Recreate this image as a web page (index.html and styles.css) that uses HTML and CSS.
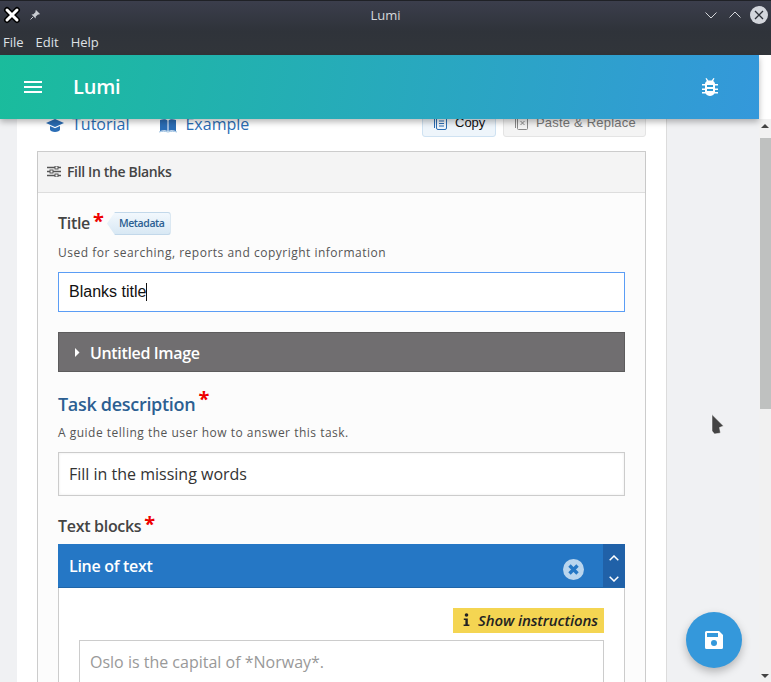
FILE: index.html
```html
<!DOCTYPE html>
<html lang="en">
<head>
<meta charset="utf-8">
<title>Lumi</title>
<link rel="stylesheet" href="styles.css">
</head>
<body>
<div class="window">
  <header class="chrome">
    <div class="titlebar">
      <div class="tb-left">
        <svg class="app-x" width="18" height="18" viewBox="0 0 18 18"><path d="M4 4l10 10M14 4L4 14" stroke="#000" stroke-width="6" stroke-linecap="round"/><path d="M4 4l10 10M14 4L4 14" stroke="#fff" stroke-width="3" stroke-linecap="round"/></svg>
        <svg class="pin" width="12" height="12" viewBox="0 0 12 12"><path d="M7 1l4 4-1 .6-1-.2L6.800 7.600 6.600 9.500 2.500 5.400 4.400 5.200 6.600 3 6.400 2z" fill="#c9ccd2"/><path d="M4 8L1.500 10.500" stroke="#c9ccd2"/></svg>
      </div>
      <span class="tb-title">Lumi</span>
      <div class="tb-right">
        <svg width="14" height="14" viewBox="0 0 14 14"><path d="M1.500 4.500L7 10l5.500-5.500" fill="none" stroke="#d5d7db" stroke-width="1"/></svg>
        <svg class="tb-up" width="14" height="14" viewBox="0 0 14 14"><path d="M1.500 9.500L7 4l5.500 5.500" fill="none" stroke="#d5d7db" stroke-width="1"/></svg>
        <svg width="18" height="18" viewBox="0 0 18 18"><circle cx="9" cy="9" r="9" fill="#d3d6dc"/><path d="M5 5l8 8M13 5l-8 8" stroke="#2d3038" stroke-width="1.300"/></svg>
      </div>
    </div>
    <nav class="menubar"><span>File</span><span>Edit</span><span>Help</span></nav>
  </header>

  <div class="appbar">
    <div class="appbar-left">
      <svg width="18" height="12" viewBox="0 0 18 12"><path d="M0 1h18M0 6h18M0 11h18" stroke="#fff" stroke-width="2"/></svg>
      <span class="appbar-title">Lumi</span>
    </div>
    <svg class="bug" width="16" height="18" viewBox="0 0 16 18"><path d="M4.500 0l1.800 2.500h3.400L11.500 0l1 .6L11.200 3C12.500 4 13 5 13 6h3v1.500h-3v3h3V12h-3v2h3v1.500h-3.500C11.500 17 10 18 8 18s-3.500-1-4.500-2.500H0V14h3v-2H0v-1.500h3v-3H0V6h3c0-1 .5-2 1.800-3L3.500.6z" fill="#fff"/><path d="M5 8h6M5 12h6" stroke="#2e9ad2" stroke-width="1.800"/></svg>
  </div>

  <div class="viewport">
    <main class="page">
      <section class="card">
        <div class="toolbar">
          <div class="links">
            <a class="link">
              <svg width="18" height="14" viewBox="0 0 18 14"><path d="M9 0L0 4l9 4 9-4z" fill="#2a6db5"/><path d="M4 7v3.500C4 12 6.500 13 9 13s5-1 5-2.500V7l-5 2.300z" fill="#2a6db5"/></svg>
              Tutorial
            </a>
            <a class="link">
              <svg width="18" height="15" viewBox="0 0 18 15"><path d="M1 2c3-1 6-1 7.500.5V13C7 12 4 12 1 13z" fill="#2a6db5"/><path d="M17 2c-3-1-6-1-7.500.5V13c1.500-1 4.500-1 7.500 0z" fill="#2a6db5"/><path d="M0 14c3-1 6-1 9 0 3-1 6-1 9 0" fill="none" stroke="#9bbfe0"/></svg>
              Example
            </a>
          </div>
          <div class="clip-btns">
            <button class="btn btn-copy">
              <svg width="14" height="16" viewBox="0 0 14 16"><path d="M1.500 3v10" stroke="#2a6db5"/><rect x="3.500" y="1.500" width="10" height="13" rx="1.500" fill="none" stroke="#2a6db5"/><path d="M6 6h5M6 8.500h5M6 11h5" stroke="#2a6db5"/></svg>
              Copy
            </button>
            <button class="btn btn-paste">
              <svg width="14" height="16" viewBox="0 0 14 16"><path d="M1.500 3v10" stroke="#888"/><rect x="3.500" y="1.500" width="10" height="13" rx="1" fill="none" stroke="#888"/><path d="M6.500 6l4 4M10.500 6l-4 4" stroke="#888"/></svg>
              Paste &amp; Replace
            </button>
          </div>
        </div>

        <div class="panel">
          <div class="panel-head">
            <svg width="14" height="11" viewBox="0 0 14 11"><path d="M0 1.500h14M0 5.500h14M0 9.500h14" stroke="#555" stroke-width="1.300"/><rect x="8" y="0" width="3" height="3" fill="#f4f4f4" stroke="#555"/><rect x="3" y="4" width="3" height="3" fill="#f4f4f4" stroke="#555"/><rect x="8" y="8" width="3" height="3" fill="#f4f4f4" stroke="#555"/></svg>
            <span>Fill In the Blanks</span>
          </div>
          <div class="panel-body">
            <div class="field field-title">
              <div class="label-row">
                <span class="label">Title</span><span class="star">*</span>
                <span class="tag">Metadata</span>
              </div>
              <p class="hint hint-title">Used for searching, reports and copyright information</p>
              <div class="input input-focus">Blanks title<i class="caret"></i></div>
            </div>

            <div class="group-head">
              <svg width="6" height="9" viewBox="0 0 6 9"><path d="M1 0l4.500 4.500L1 9z" fill="#fff"/></svg>
              <span>Untitled Image</span>
            </div>

            <div class="field field-task">
              <div class="label-row">
                <span class="label label-big">Task description</span><span class="star star-big">*</span>
              </div>
              <p class="hint hint-task">A guide telling the user how to answer this task.</p>
              <div class="input input-plain">Fill in the missing words</div>
            </div>

            <div class="field field-blocks">
              <div class="label-row">
                <span class="label">Text blocks</span><span class="star">*</span>
              </div>
              <div class="item-head">
                <span class="item-title">Line of text</span>
                <svg class="item-x" width="21" height="21" viewBox="0 0 21 21"><circle cx="10.500" cy="10.500" r="10.500" fill="#b9d5ee"/><path d="M6.500 6.500l8 8M14.500 6.500l-8 8" stroke="#2577c5" stroke-width="3.400"/></svg>
                <div class="item-order">
                  <svg width="10" height="6" viewBox="0 0 10 6"><path d="M.7 5.300L5 1l4.300 4.300" fill="none" stroke="#fff" stroke-width="1.500"/></svg>
                  <svg width="10" height="6" viewBox="0 0 10 6"><path d="M.7.700L5 5 9.300.7" fill="none" stroke="#fff" stroke-width="1.500"/></svg>
                </div>
              </div>
              <div class="item-body">
                <div class="instr-row">
                  <span class="instr">
                    <svg width="7" height="14" viewBox="0 0 7 14"><circle cx="3.500" cy="2" r="1.800" fill="#222"/><path d="M.8 5.500h4v6h1.600V13H.6v-1.500h1.800V7H.8z" fill="#222"/></svg>
                    Show instructions
                  </span>
                </div>
                <div class="input input-ph">Oslo is the capital of *Norway*.</div>
              </div>
            </div>
          </div>
        </div>
      </section>
      <button class="fab" aria-label="Save">
        <svg width="18" height="18" viewBox="0 0 18 18"><path d="M1.500 0H14l4 4v12.500a1.500 1.500 0 0 1-1.500 1.500h-15A1.500 1.500 0 0 1 0 16.500v-15A1.500 1.500 0 0 1 1.500 0z" fill="#fff"/><rect x="2" y="2" width="11" height="4" fill="#3498db"/><circle cx="9" cy="12" r="3" fill="#3498db"/></svg>
      </button>
      <svg class="cursor" width="14" height="22" viewBox="0 0 14 22"><path d="M1 .5L12.500 12 8.500 13.500 9.500 19 3.500 20 1 17z" fill="#444" stroke="#fff" stroke-width=".5"/></svg>
    </main>
    <aside class="scrollbar">
      <span class="sb-arrow sb-up"></span>
      <div class="sb-thumb"></div>
      <span class="sb-arrow sb-down"></span>
    </aside>
  </div>
</div>
</body>
</html>
```

FILE: styles.css
```css
* { box-sizing: border-box; }
html, body { margin: 0; padding: 0; height: 100%; overflow: hidden; }
body { font-family: "Open Sans", sans-serif; color: #333; }
.window { width: 771px; height: 682px; display: flex; flex-direction: column; overflow: hidden; position: relative; }

.chrome { height: 55px; flex: none; background: linear-gradient(#3b3e4c 0, #2f333a 30px, #31353a 100%); border-top: 1px solid #1f2126; color: #e6e8ec; }
.titlebar { height: 28px; display: flex; align-items: center; justify-content: space-between; position: relative; padding: 0 3px; }
.tb-left { display: flex; align-items: center; gap: 8px; }
.tb-right { display: flex; align-items: center; gap: 8px; }
.tb-up { margin-left: 2px; }
.tb-title { position: absolute; left: 0; right: 0; text-align: center; font-size: 13px; color: #d6d8dc; }
.menubar { height: 26px; display: flex; gap: 12px; align-items: center; padding-left: 3px; font-size: 13px; color: #dfe2e6; }

.appbar { height: 64px; flex: none; display: flex; align-items: center; justify-content: space-between; padding: 0 41px 0 24px; background: linear-gradient(100deg, #1abc9c 0%, #3498db 100%); width: 759px; box-shadow: 0 3px 6px rgba(0,0,0,.28); position: relative; z-index: 2; }
.appbar-left { display: flex; align-items: center; gap: 31px; }
.appbar-title { font-size: 20px; font-weight: 600; color: #fff; letter-spacing: -.2px; line-height: 26px; }

.viewport { flex: 1; min-height: 0; display: flex; margin-top: -64px; padding-top: 64px; }
.page { width: 759px; flex: none; background: #f0f1f3; padding: 0 92px 0 17px; position: relative; overflow: hidden; }
.scrollbar { flex: 1; background: #f1f1f1; position: relative; display: flex; flex-direction: column; }
.sb-thumb { width: 11px; height: 271px; margin: 19px 0 0 1px; background: #bfc1c0; }
.sb-arrow { position: absolute; left: 2px; width: 0; height: 0; border-left: 4px solid transparent; border-right: 4px solid transparent; }
.sb-up { top: 5px; border-bottom: 4px solid #444; }
.sb-down { bottom: 4px; border-top: 4px solid #444; }

.card { width: 650px; background: #fff; border-right: 1px solid #dcdcdc; padding: 0 20px; height: 700px; }
.toolbar { height: 32px; display: flex; justify-content: space-between; align-items: flex-end; margin-top: -14px; position: relative; }
.links { display: flex; gap: 30px; align-self: flex-start; padding: 9px 0 0 9px; }
.link { display: inline-flex; align-items: center; gap: 8px; font-size: 16px; color: #2a6db5; line-height: 20px; }
.link svg { margin-top: 3px; }
.clip-btns { display: flex; gap: 7px; height: 27px; }
.btn { display: inline-flex; align-items: center; gap: 8px; font-family: "Liberation Sans", sans-serif; font-size: 13px; padding: 0 0 2px 10px; border-radius: 3px; white-space: nowrap; }
.btn-copy { background: #eef5fb; border: 1px solid #cfe2f2; color: #111; width: 74px; }
.btn-paste { background: #f4f4f4; border: 1px solid #e4e4e4; color: #777; width: 143px; letter-spacing: .2px; }

.panel { margin-top: 0; border: 1px solid #ccc; border-bottom: 0; width: 609px; height: 600px; }
.toolbar + .panel { margin-top: 14px; }
.panel-head { height: 41px; padding: 0 0 2px 9px; background: #f4f4f4; border-bottom: 1px solid #ddd; box-shadow: 0 1px 2px rgba(0,0,0,.05); display: flex; align-items: center; gap: 6px; font-size: 14px; font-weight: 600; letter-spacing: -.35px; color: #444; }
.panel-body { padding: 18px 20px 0; background: #fcfcfc; }
.label-row { display: flex; align-items: flex-start; line-height: 24px; }
.label { font-size: 16px; font-weight: 600; color: #444; letter-spacing: -.3px; }
.label-big { font-size: 18px; color: #2c5f92; line-height: 28px; }
.star { color: #e00; font-size: 20px; font-weight: 700; margin-left: 3px; line-height: 20px; }
.star-big { font-size: 20px; line-height: 18px; }
.tag { margin-left: 3px; margin-top: 1px; height: 23px; line-height: 21px; padding: 0 5px 0 12px; font-size: 10.500px; font-weight: 600; letter-spacing: -.4px; color: #2c5f92; background: linear-gradient(#f2f8fd, #d8e8f4); border: 1px solid #c2d8ea; border-left: 0; border-radius: 0 3px 3px 0; clip-path: polygon(0 50%, 8px 0, 100% 0, 100% 100%, 8px 100%); }
.hint { font-size: 12px; letter-spacing: .5px; color: #555; line-height: 20px; }
.hint-title { margin: 8px 0 0; }
.hint-task { margin: 5px 0 0; }
.input { width: 100%; background: #fff; padding: 0 10px; display: flex; align-items: center; }
.input-focus { height: 40px; margin-top: 9px; border: 1px solid #5b9df5; font-family: "Liberation Sans", sans-serif; font-size: 16px; color: #111; }
.caret { display: inline-block; width: 1px; height: 18px; background: #111; }
.group-head { height: 40px; margin-top: 20px; padding: 1px 0 0 15px; background: #706e70; border: 1px solid #5d5c5d; display: flex; align-items: center; gap: 10px; color: #fff; font-size: 16px; font-weight: 600; letter-spacing: -.35px; }
.field-task { margin-top: 18px; }
.input-plain { height: 44px; margin-top: 9px; border: 1px solid #ccc; box-shadow: inset 0 0 3px rgba(0,0,0,.08); font-size: 16px; color: #333; }
.field-blocks { margin-top: 18px; }
.item-head { height: 44px; margin-top: 6px; background: #2577c5; border-bottom: 1px solid #1f65a8; display: flex; align-items: center; color: #fff; padding-left: 11px; font-size: 16px; font-weight: 600; position: relative; }
.item-title { flex: 1; letter-spacing: -.3px; }
.item-x { margin-right: 19px; margin-top: 8px; }
.item-order { width: 22px; height: 100%; background: #2061a8; display: flex; flex-direction: column; align-items: center; justify-content: space-between; padding: 11px 0 5px; }
.item-body { background: #fff; border: 1px solid #ccc; border-top: 0; padding: 20px 20px 0; height: 120px; }
.instr-row { display: flex; justify-content: flex-end; }
.instr { height: 25px; width: 151px; padding: 0 0 2px 10px; background: #f4d552; display: inline-flex; align-items: center; gap: 8px; font-size: 15px; font-style: italic; font-weight: 600; color: #222; letter-spacing: -.1px; white-space: nowrap; }
.input-ph { height: 44px; margin-top: 7px; border: 1px solid #ccc; font-size: 16px; color: #999; }

.fab { position: absolute; left: 686px; top: 493px; width: 56px; height: 56px; border-radius: 50%; border: 0; padding: 0; background: #3498db; box-shadow: 0 4px 8px rgba(0,0,0,.25); display: flex; align-items: center; justify-content: center; }
.cursor { position: absolute; left: 711px; top: 295px; }
```
